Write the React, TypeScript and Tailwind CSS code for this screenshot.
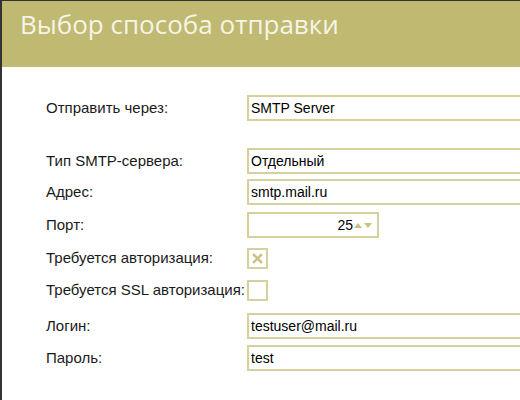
import React from "react";

const Label = ({ children }: { children: React.ReactNode }) => (
  <div className="w-[201px] shrink-0 text-[15px] leading-none text-[#1a1a1a] whitespace-nowrap -mt-[2px]">{children}</div>
);

const Box = ({ children, className = "" }: { children?: React.ReactNode; className?: string }) => (
  <div
    className={`h-[26px] shrink-0 border-2 border-[#d6d09c] bg-white flex items-center px-[2px] text-[14px] text-black ${className}`}
  >
    {children}
  </div>
);

export default function App() {
  return (
    <div className="w-[520px] h-[400px] bg-white border-l-2 border-t border-[#333333] overflow-hidden font-['Liberation_Sans',Arial,sans-serif]">
      <div className="h-[66px] bg-[#bfb972] pl-[18px] pt-[6px]">
        <h1 className="text-[26px] leading-[34px] text-[#f6f4e4] font-normal whitespace-nowrap font-['Open_Sans',sans-serif]">Выбор способа отправки</h1>
      </div>
      <div className="pl-[44px] pt-[28px] flex flex-col">
        <div className="flex items-center h-[26px]">
          <Label>Отправить через:</Label>
          <Box className="w-[320px]">SMTP Server</Box>
        </div>
        <div className="flex items-center h-[26px] mt-[27px]">
          <Label>Тип SMTP-сервера:</Label>
          <Box className="w-[320px]">Отдельный</Box>
        </div>
        <div className="flex items-center h-[26px] mt-[5px]">
          <Label>Адрес:</Label>
          <Box className="w-[320px]">smtp.mail.ru</Box>
        </div>
        <div className="flex items-center h-[26px] mt-[7px]">
          <Label>Порт:</Label>
          <Box className="w-[132px] justify-end pr-[3px]">
            <span>25</span>
            <svg width="20" height="8" viewBox="0 0 20 8" className="ml-[1px]">
              <polygon points="0,7 4,2 8,7" fill="#c9c17f" />
              <polygon points="10,2 18,2 14,7" fill="#c9c17f" />
            </svg>
          </Box>
        </div>
        <div className="flex items-center h-[21px] mt-[10px]">
          <Label>Требуется авторизация:</Label>
          <div className="w-[21px] h-[21px] border-2 border-[#d6d09c] flex items-center justify-center">
            <svg width="11" height="11" viewBox="0 0 11 11">
              <path d="M2 2 L9 9 M9 2 L2 9" stroke="#cbc385" strokeWidth="2.6" strokeLinecap="square" />
            </svg>
          </div>
        </div>
        <div className="flex items-center h-[21px] mt-[11px]">
          <Label>Требуется SSL авторизация:</Label>
          <div className="w-[21px] h-[21px] border-2 border-[#d6d09c]" />
        </div>
        <div className="flex items-center h-[26px] mt-[12px]">
          <Label>Логин:</Label>
          <Box className="w-[320px]">testuser@mail.ru</Box>
        </div>
        <div className="flex items-center h-[26px] mt-[6px]">
          <Label>Пароль:</Label>
          <Box className="w-[320px]">test</Box>
        </div>
      </div>
    </div>
  );
}
